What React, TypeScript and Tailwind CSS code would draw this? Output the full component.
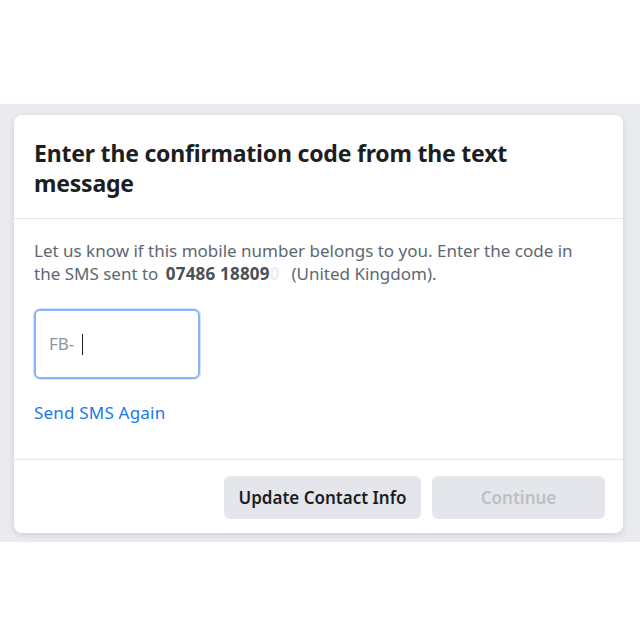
export default function App() {
  return (
    <div className="min-h-[640px] bg-white pt-[104px] font-['Noto_Sans',sans-serif]">
      <div className="bg-[#e9ebee] pl-[14px] pr-[17px] pt-[11px] pb-[9px]">
        <div className="overflow-hidden rounded-lg bg-white shadow-[0_2px_6px_rgba(0,0,0,0.12)]">
          <div className="border-b border-[#e5e6e9] px-5 pt-[23px] pb-[20px]">
            <h2 className="text-[23px] font-bold leading-[30px] tracking-[-0.2px] text-[#1c1e21]">
              Enter the confirmation code from the text message
            </h2>
          </div>
          <div className="px-5 pt-5 pb-[34px]">
            <p className="text-[17px] leading-[23px] text-[#606770]">
              Let us know if this mobile number belongs to you. Enter the code in the SMS sent to{" "}
              <b className="ml-[3px] font-bold tracking-[0.2px] text-[#4b4f56]">07486 18809</b>
              <b className="font-bold text-[#eceef0]">0</b>
              <span className="ml-[12px]">(United Kingdom).</span>
            </p>
            <div className="mt-6 flex h-[70px] w-[166px] items-center rounded-md border-2 border-[#8ab4f8] px-[13px] shadow-[0_0_0_1px_rgba(138,180,248,0.35)]">
              <span className="text-[17px] text-[#8d949e]">FB-</span>
              <span className="ml-[8px] h-[21px] w-px bg-[#1c1e21]" />
            </div>
            <a className="mt-[22px] block text-[17px] leading-6 tracking-[0.2px] text-[#1877f2]">Send SMS Again</a>
          </div>
          <div className="flex justify-end gap-[11px] border-t border-[#e5e6e9] pt-4 pb-[14px] pr-[18px]">
            <button className="h-[43px] w-[197px] rounded-md bg-[#e4e6eb] text-[17px] font-semibold text-[#1c1e21]">
              Update Contact Info
            </button>
            <button className="h-[43px] w-[173px] rounded-md bg-[#e4e6eb] text-[17px] font-semibold text-[#bcc0c4]">
              Continue
            </button>
          </div>
        </div>
      </div>
    </div>
  );
}
